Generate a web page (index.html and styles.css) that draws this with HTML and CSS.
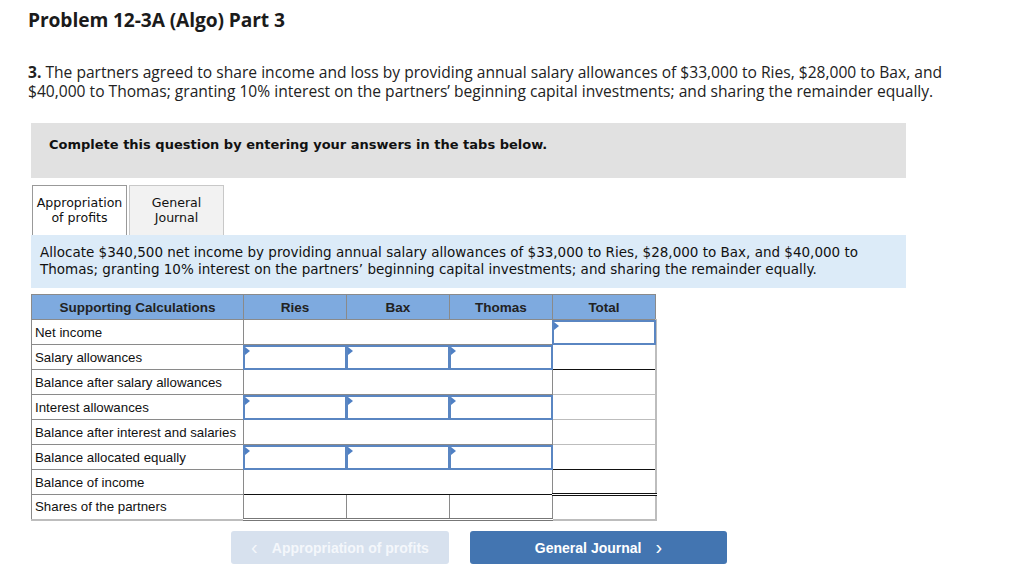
FILE: index.html
```html
<!DOCTYPE html>
<html>
<head>
<meta charset="utf-8">
<link rel="stylesheet" href="styles.css">
</head>
<body>
<div class="page">
  <h1 class="title">Problem 12-3A (Algo) Part 3</h1>
  <p class="question"><b>3.</b> The partners agreed to share income and loss by providing annual salary allowances of $33,000 to Ries, $28,000 to Bax, and $40,000 to Thomas; granting 10% interest on the partners’ beginning capital investments; and sharing the remainder equally.</p>

  <div class="notice">Complete this question by entering your answers in the tabs below.</div>

  <div class="tabs">
    <div class="tab active">Appropriation<br>of profits</div>
    <div class="tab">General<br>Journal</div>
  </div>

  <div class="instr">Allocate $340,500 net income by providing annual salary allowances of $33,000 to Ries, $28,000 to Bax, and $40,000 to Thomas; granting 10% interest on the partners’ beginning capital investments; and sharing the remainder equally.</div>

  <table class="calc">
    <colgroup>
      <col class="c-label"><col class="c-num"><col class="c-num"><col class="c-num"><col class="c-num">
    </colgroup>
    <thead>
      <tr><th>Supporting Calculations</th><th>Ries</th><th>Bax</th><th>Thomas</th><th>Total</th></tr>
    </thead>
    <tbody>
      <tr><td class="lbl">Net income</td><td colspan="3" class="span"></td><td class="tot"><div class="inp"></div></td></tr>
      <tr><td class="lbl">Salary allowances</td><td class="cell"><div class="inp"></div></td><td class="cell"><div class="inp"></div></td><td class="cell"><div class="inp"></div></td><td class="tot sum"></td></tr>
      <tr><td class="lbl">Balance after salary allowances</td><td colspan="3" class="span"></td><td class="tot"></td></tr>
      <tr><td class="lbl">Interest allowances</td><td class="cell"><div class="inp"></div></td><td class="cell"><div class="inp"></div></td><td class="cell"><div class="inp"></div></td><td class="tot"></td></tr>
      <tr><td class="lbl">Balance after interest and salaries</td><td colspan="3" class="span"></td><td class="tot"></td></tr>
      <tr><td class="lbl">Balance allocated equally</td><td class="cell"><div class="inp"></div></td><td class="cell"><div class="inp"></div></td><td class="cell"><div class="inp"></div></td><td class="tot sum"></td></tr>
      <tr><td class="lbl">Balance of income</td><td colspan="3" class="span sum"></td><td class="tot dbl"></td></tr>
      <tr class="last"><td class="lbl">Shares of the partners</td><td class="plain"></td><td class="plain"></td><td class="plain"></td><td class="tot"></td></tr>
    </tbody>
  </table>

  <div class="nav">
    <button class="btn prev"><span class="chev">&lsaquo;</span>Appropriation of profits</button>
    <button class="btn next">General Journal<span class="chev">&rsaquo;</span></button>
  </div>
</div>
</body>
</html>
```

FILE: styles.css
```css
* { box-sizing: border-box; }
html, body { margin: 0; padding: 0; background: #fff; }
body { font-family: "Open Sans", "Lato", sans-serif; color: #1a1a1a; }

.page { padding: 0 0 0 28px; width: 1024px; }

.title {
  margin: 0;
  padding-top: 8px;
  font-size: 19.2px;
  font-weight: 700;
  line-height: 24px;
  color: #1b1b1b;
  letter-spacing: -0.1px;
}

.question {
  margin: 31px 0 0 0;
  width: 950px;
  font-size: 15.6px;
  line-height: 19px;
  color: #222;
}
.question b { font-weight: 700; }

.notice {
  margin: 22px 0 0 3px;
  width: 875px;
  height: 55px;
  background: #e1e1e1;
  padding: 14px 0 0 18px;
  font-family: "DejaVu Sans", Verdana, sans-serif;
  font-size: 13px;
  font-weight: 700;
  color: #111;
}

.tabs {
  display: flex;
  gap: 2px;
  margin: 7px 0 0 4px;
  height: 50px;
  align-items: flex-end;
}
.tab {
  width: 95px;
  height: 50px;
  border: 1px solid #c8c8c8;
  border-bottom: none;
  background: #f2f2f2;
  font-family: "DejaVu Sans", Verdana, sans-serif;
  font-size: 12.6px;
  line-height: 15px;
  text-align: center;
  padding-top: 9px;
  color: #111;
}
.tab.active { background: #fff; border-color: #999; }

.instr {
  margin: 0 0 0 3px;
  width: 875px;
  height: 53px;
  background: #dcebf8;
  padding: 9px 40px 0 9px;
  font-family: "DejaVu Sans", Verdana, sans-serif;
  font-size: 13.5px;
  line-height: 17px;
  color: #111;
}

.calc {
  margin: 6px 0 0 3px;
  border-collapse: collapse;
  table-layout: fixed;
  width: 624px;
  font-family: "Liberation Sans", Arial, sans-serif;
  font-size: 13.3px;
}
.c-label { width: 212px; }
.c-num { width: 103px; }

.calc th {
  height: 25px;
  background: #7eaadf;
  border: 1px solid #8a8a8a;
  font-weight: 700;
  font-size: 13.5px;
  color: #222;
  text-align: center;
  padding: 0;
}

.calc td {
  height: 25px;
  padding: 0;
  border: 1px solid #8a8a8a;
  vertical-align: middle;
}
.calc td.lbl { padding-left: 3px; color: #111; }
.calc td.tot { border: 1px solid #bdbdbd; border-right: 2px solid #bdbdbd; }
.calc td.sum { border-bottom: 1px solid #111; }
.calc td.dbl { border-bottom: 3px double #111; }
.calc tr.last td { border-bottom: 2px solid #bdbdbd; }
.calc tr.last td.plain { border-bottom: 3px double #777; }

.inp {
  position: relative;
  height: 25px;
  border: 2px solid #5a86c2;
  background: #fff;
  margin: -1px;
}
.inp::before {
  content: "";
  position: absolute;
  left: 0;
  top: 0;
  border-top: 4px solid transparent;
  border-bottom: 4px solid transparent;
  border-left: 5px solid #4f80c4;
}

.nav {
  display: flex;
  gap: 21px;
  margin: 10px 0 0 203px;
}
.btn {
  height: 33px;
  border: none;
  border-radius: 3px;
  font-family: "Liberation Sans", Arial, sans-serif;
  font-weight: 700;
  font-size: 14px;
  color: #fff;
  display: flex;
  align-items: center;
  justify-content: center;
  gap: 14px;
  padding: 0;
}
.btn.prev { width: 218px; background: #d7e1ee; color: #f4f7fb; }
.btn.next { width: 257px; background: #4375b1; }
.chev { font-size: 20px; font-weight: 400; line-height: 1; margin-top: -2px; }
```
